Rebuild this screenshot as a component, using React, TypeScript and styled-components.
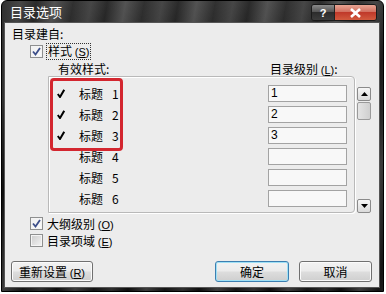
import React from "react";
import styled, { createGlobalStyle } from "styled-components";

const GlobalStyle = createGlobalStyle`
  body {
    margin: 0;
    background: #ffffff;
    font-family: "Noto Sans CJK SC", "Liberation Sans", sans-serif;
    font-size: 12px;
    color: #000;
  }
`;

const Frame = styled.div`
  width: 383px;
  height: 292px;
  box-sizing: border-box;
  margin-left: 1px;
  border: 1px solid #000;
  border-radius: 6px 6px 0 0;
  padding: 0 3px 3px 2px;
  display: flex;
  flex-direction: column;
  background: linear-gradient(to bottom, rgba(255, 255, 255, 0.12), rgba(0, 0, 0, 0) 40%),
    repeating-linear-gradient(100deg, #141414 0px, #2e2e2e 18px, #0e0e0e 34px, #3c3c3c 52px, #161616 70px);
`;

const TitleBar = styled.div`
  height: 21px;
  display: flex;
  align-items: center;
  justify-content: space-between;
  padding: 0 3px 0 6px;
`;

const Title = styled.span`
  color: #fff;
  font-size: 13px;
  line-height: 16px;
`;

const TitleButtons = styled.div`
  display: flex;
  height: 15px;
  margin-top: 2px;
  border: 1px solid #1a1a1a;
  border-radius: 3px;
  overflow: hidden;
`;

const TitleButton = styled.div<{ $close?: boolean }>`
  width: ${({ $close }) => ($close ? "41px" : "22px")};
  display: flex;
  align-items: center;
  justify-content: center;
  color: #fff;
  font-family: "Liberation Sans", sans-serif;
  font-weight: bold;
  font-size: 11px;
  border-left: ${({ $close }) => ($close ? "1px solid #222" : "none")};
  background: ${({ $close }) =>
    $close
      ? "linear-gradient(#e8a493 0%, #d27060 45%, #c0392a 50%, #d25a3e 100%)"
      : "linear-gradient(#8a8a8a 0%, #555 45%, #2c2c2c 50%, #3c3c3c 100%)"};
`;

const Content = styled.div`
  flex: 1;
  background: #ececec;
  border: 1px solid #555;
  display: flex;
  flex-direction: column;
`;

const Label = styled.div`
  margin: 3px 0 0 7px;
  line-height: 16px;
`;

const CheckRow = styled.label<{ $h?: number }>`
  display: flex;
  align-items: center;
  gap: 4px;
  height: ${({ $h }) => $h ?? 15}px;
  margin-left: 25px;
`;

const Box = styled.span<{ $checked?: boolean }>`
  width: 11px;
  height: 11px;
  border: 1px solid #8e8f8f;
  display: flex;
  align-items: center;
  justify-content: center;
  background: ${({ $checked }) =>
    $checked ? "linear-gradient(135deg, #f0f0f0, #fafafa)" : "linear-gradient(135deg, #cbcbcb, #f4f4f4)"};
  box-shadow: inset 0 0 0 1px #f4f4f4;
`;

const Focus = styled.span`
  outline: 1px dotted #333;
  outline-offset: 0px;
  padding: 0 1px;
  line-height: 14px;
`;

const Header = styled.div`
  display: flex;
  height: 16px;
  align-items: center;
  margin-top: 1px;
`;

const HeaderLeft = styled.span`
  margin-left: 53px;
  width: 212px;
`;

const Main = styled.div`
  display: flex;
  margin: 0 0 0 43px;
  height: 137px;
`;

const Group = styled.div`
  position: relative;
  width: 307px;
  box-sizing: border-box;
  border: 1px solid #b9b9b9;
  border-radius: 0 4px 4px 0;
  box-shadow: 1px 1px 0 #fff, inset 1px 1px 0 #fff;
  padding: 6px 0 0 0;
`;

const Row = styled.div`
  height: 21px;
  display: flex;
  align-items: center;
`;

const Tick = styled.span`
  width: 30px;
  padding-left: 8px;
  box-sizing: border-box;
  display: flex;
  align-items: center;
`;

const Style = styled.span`
  width: 189px;
  display: flex;
  gap: 9px;
`;

const Level = styled.div`
  width: 79px;
  height: 17px;
  box-sizing: border-box;
  border: 1px solid #a3a3a3;
  background: #f8f8f8;
  padding-left: 2px;
  line-height: 15px;
  font-family: "Liberation Sans", sans-serif;
`;

const Highlight = styled.div`
  position: absolute;
  left: 1px;
  top: 1px;
  width: 73px;
  height: 73px;
  box-sizing: border-box;
  border: 3px solid #d3262f;
  border-radius: 4px;
`;

const ScrollCol = styled.div`
  width: 14px;
  margin-left: 2px;
  padding-top: 11px;
  display: flex;
  flex-direction: column;
`;

const ScrollBtn = styled.div`
  height: 14px;
  box-sizing: border-box;
  border: 1px solid #8a8a8a;
  border-radius: 2px;
  background: linear-gradient(#f6f6f6, #dadada);
  display: flex;
  align-items: center;
  justify-content: center;
`;

const Thumb = styled.div`
  height: 18px;
  margin-top: 1px;
  box-sizing: border-box;
  border: 1px solid #9a9a9a;
  border-radius: 2px;
  background: linear-gradient(90deg, #e4e4e4, #cfcfcf);
`;

const Spacer = styled.div`
  flex: 1;
`;

const Options = styled.div`
  margin-top: 2px;
  display: flex;
  flex-direction: column;
`;

const Buttons = styled.div`
  display: flex;
  margin: 12px 0 0 6px;
  height: 21px;
`;

const Button = styled.button<{ $w: number; $default?: boolean }>`
  width: ${({ $w }) => $w}px;
  height: 21px;
  box-sizing: border-box;
  padding: 0;
  border: 1px solid ${({ $default }) => ($default ? "#3c7fb1" : "#707070")};
  border-radius: 3px;
  background: linear-gradient(#f2f2f2 0%, #ebebeb 48%, #dddddd 52%, #cfcfcf 100%);
  box-shadow: inset 0 0 0 1px ${({ $default }) => ($default ? "#9fe0f5" : "#fbfbfb")};
  font-family: "Noto Sans CJK SC", "Liberation Sans", sans-serif;
  font-size: 12px;
  color: #000;
`;

const Mnemonic = styled.span`
  font-family: "Liberation Sans", "Noto Sans CJK SC", sans-serif;
  font-size: 11px;
`;

const CheckMark = () => (
  <svg width="9" height="9" viewBox="0 0 9 9">
    <path d="M1 4.5 L3.5 7.5 L8 1" fill="none" stroke="#3d4f8a" strokeWidth="1.8" />
  </svg>
);

const ListTick = () => (
  <svg width="8" height="9" viewBox="0 0 8 9">
    <path d="M0.8 5 L3 8 L7.2 0.8" fill="none" stroke="#000" strokeWidth="2" />
  </svg>
);

const Arrow = ({ up }: { up?: boolean }) => (
  <svg width="7" height="4" viewBox="0 0 7 4">
    <path d={up ? "M0 4 L3.5 0 L7 4 Z" : "M0 0 L3.5 4 L7 0 Z"} fill="#000" />
  </svg>
);

const rows = [
  { n: 1, on: true },
  { n: 2, on: true },
  { n: 3, on: true },
  { n: 4, on: false },
  { n: 5, on: false },
  { n: 6, on: false },
];

export default function App() {
  return (
    <>
      <GlobalStyle />
      <Frame>
        <TitleBar>
          <Title>目录选项</Title>
          <TitleButtons>
            <TitleButton>?</TitleButton>
            <TitleButton $close>
              <svg width="13" height="10" viewBox="0 0 13 10">
                <path d="M2 1 L11 9 M11 1 L2 9" stroke="#fff" strokeWidth="2.6" />
              </svg>
            </TitleButton>
          </TitleButtons>
        </TitleBar>
        <Content>
          <Label>目录建自:</Label>
          <CheckRow style={{ marginTop: 2 }}>
            <Box $checked>
              <CheckMark />
            </Box>
            <Focus>
              样式 <Mnemonic>(<u>S</u>)</Mnemonic>
            </Focus>
          </CheckRow>
          <Header>
            <HeaderLeft>有效样式:</HeaderLeft>
            <span>
              目录级别 <Mnemonic>(<u>L</u>)</Mnemonic>:
            </span>
          </Header>
          <Main>
            <Group>
              {rows.map((r) => (
                <Row key={r.n}>
                  <Tick>{r.on && <ListTick />}</Tick>
                  <Style>
                    <span>标题</span>
                    <span>{r.n}</span>
                  </Style>
                  <Level>{r.on ? r.n : ""}</Level>
                </Row>
              ))}
              <Highlight />
            </Group>
            <ScrollCol>
              <ScrollBtn>
                <Arrow up />
              </ScrollBtn>
              <Thumb />
              <Spacer />
              <ScrollBtn>
                <Arrow />
              </ScrollBtn>
            </ScrollCol>
          </Main>
          <Options>
            <CheckRow $h={17}>
              <Box $checked>
                <CheckMark />
              </Box>
              <span>
                大纲级别 <Mnemonic>(<u>O</u>)</Mnemonic>
              </span>
            </CheckRow>
            <CheckRow $h={17}>
              <Box />
              <span>
                目录项域 <Mnemonic>(<u>E</u>)</Mnemonic>
              </span>
            </CheckRow>
          </Options>
          <Buttons>
            <Button $w={82}>
              重新设置 <Mnemonic>(<u>R</u>)</Mnemonic>
            </Button>
            <Spacer />
            <Button $w={74} $default>
              确定
            </Button>
            <Button $w={73} style={{ marginLeft: 10, marginRight: 7 }}>
              取消
            </Button>
          </Buttons>
        </Content>
      </Frame>
    </>
  );
}
